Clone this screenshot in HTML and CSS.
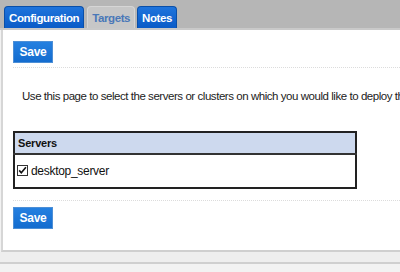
FILE: index.html
```html
<!DOCTYPE html>
<html>
<head>
<meta charset="utf-8">
<link rel="stylesheet" href="styles.css">
</head>
<body>
<div class="tabbar">
  <div class="tab active">Configuration</div>
  <div class="tab current">Targets</div>
  <div class="tab active">Notes</div>
</div>
<div class="panel">
  <div class="btnrow"><button class="save">Save</button></div>
  <p class="intro">Use this page to select the servers or clusters on which you would like to deploy this</p>
  <table class="servers">
    <tr><th>Servers</th></tr>
    <tr><td><span class="cb"><svg width="11" height="11" viewBox="0 0 11 11"><rect x="0.5" y="0.5" width="10" height="10" fill="#fff" stroke="#333"/><path d="M2.2 5.4 L4.3 7.8 L8.9 2.3" fill="none" stroke="#111" stroke-width="1.6"/></svg></span>desktop_server</td></tr>
  </table>
  <div class="btnrow bottom"><button class="save">Save</button></div>
</div>
<div class="footer"></div>
</body>
</html>
```
FILE: styles.css
```css
html, body { margin: 0; padding: 0; }
body {
  width: 400px; height: 272px; overflow: hidden;
  background: #f2f2f2;
  font-family: "Liberation Sans", Arial, sans-serif;
}
.tabbar {
  height: 28px;
  background: #b6b6b6;
  border-bottom: 2px solid #c9c9c9;
  display: flex;
  align-items: flex-end;
  padding-left: 4px;
  gap: 3px;
  box-sizing: content-box;
}
.tab {
  height: 22px;
  line-height: 22px;
  padding: 0 4px;
  font-size: 11.5px;
  letter-spacing: -0.4px;
  font-weight: bold;
  border-radius: 4px 4px 0 0;
  box-sizing: border-box;
}
.tab.active {
  background: linear-gradient(#1f74dc, #0a5bc7);
  color: #fff;
  border: 1px solid #0a4fa8;
  border-bottom: none;
}
.tab.current {
  background: #c7c7c7;
  color: #4a78b8;
  border: 1px solid #d6d6d6;
  border-bottom: none;
  margin-right: -1px;
}
.panel {
  background: #fff;
  border-left: 2px solid #d6d6d6;
  margin-left: 1px;
  height: 222px;
  padding-left: 10px;
  box-sizing: border-box;
  border-bottom: 2px solid #cfcfcf;
}
.btnrow {
  padding: 11px 0 4px 0;
  border-bottom: 1px dotted #dcdcdc;
  height: 22px;
  box-sizing: content-box;
}
.btnrow.bottom { border-bottom: none; border-top: 1px dotted #dcdcdc; padding-top: 6px; }
.save {
  display: block;
  height: 22px;
  width: 40px;
  padding: 0;
  background: linear-gradient(#2580e0, #136ccf);
  border: 1px solid #4d8fd6;
  color: #fff;
  font-family: "Liberation Sans", Arial, sans-serif;
  font-size: 12px;
  font-weight: bold;
  letter-spacing: -0.3px;
}
.intro {
  margin: 0;
  padding: 22px 0 0 9px;
  height: 41px;
  font-size: 11.5px;
  letter-spacing: -0.45px;
  color: #222;
  white-space: nowrap;
  overflow: hidden;
  box-sizing: content-box;
}
.servers {
  border-collapse: collapse;
  width: 344px;
  border: 2px solid #222;
  margin-bottom: 11px;
}
.servers th {
  text-align: left;
  background: #cdd9ee;
  font-size: 11px;
  letter-spacing: -0.2px;
  font-weight: bold;
  color: #111;
  height: 20px;
  padding: 0 0 0 3px;
  border-bottom: 2px solid #333;
}
.servers td {
  height: 32px;
  padding: 0 0 0 2px;
  font-size: 12px;
  letter-spacing: -0.3px;
  color: #111;
}
.cb { display: inline-block; vertical-align: -1px; margin-right: 3px; }
.footer {
  height: 10px;
  background: #eeeeee;
  border-bottom: 2px solid #cfcfcf;
}
```
